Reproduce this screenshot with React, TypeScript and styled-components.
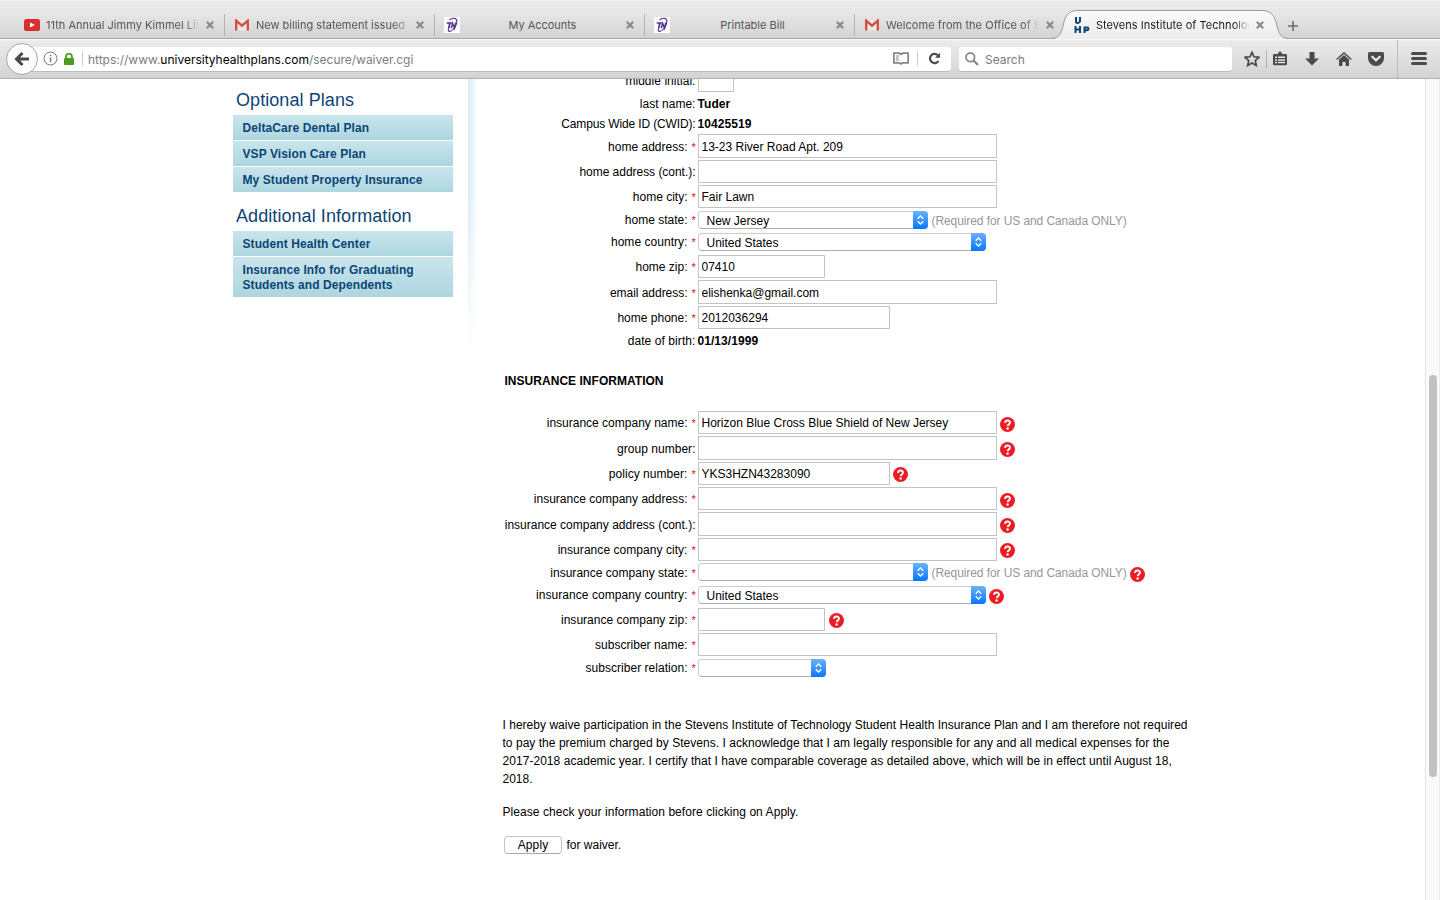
import React from "react";
import styled, { createGlobalStyle } from "styled-components";

const Global = createGlobalStyle`
  *{box-sizing:border-box}
  html,body{margin:0;padding:0;background:#fff}
  body{font-family:"Liberation Sans",Arial,sans-serif;font-size:12px;color:#000;overflow:hidden}
`;
const UI = `Inter, "Open Sans", sans-serif`;

const Window = styled.div`width:1440px;height:900px;display:flex;flex-direction:column;overflow:hidden;background:#fff;`;

/* ---- tab strip ---- */
const TabStrip = styled.div`height:39px;flex:none;display:flex;padding-left:14px;border-bottom:1px solid #a9a9a9;
  background:linear-gradient(#f4f4f4 0,#ebebeb 1px,#e6e6e6 14px,#d3d3d3 38px);`;
const TabBox = styled.div<{ $active?: boolean; $line?: boolean }>`
  position:relative;width:210px;height:38px;display:flex;align-items:center;padding:12px 0 0 9px;
  font:11px ${UI};color:${p => (p.$active ? "#1c1c1c" : "#565656")};
  ${p => p.$line && `background:linear-gradient(#b3b3b3,#b3b3b3) 0 14px/1px 22px no-repeat;`}
`;
const TabIcon = styled.span`width:18px;height:18px;flex:none;display:flex;align-items:center;justify-content:center;position:relative;`;
const TabTitle = styled.span<{ $center?: boolean; $ls: number }>`
  width:153px;margin-left:5px;overflow:hidden;white-space:nowrap;line-height:18px;position:relative;
  text-align:${p => (p.$center ? "center" : "left")};letter-spacing:${p => p.$ls}px;
  ${p => !p.$center && `mask-image:linear-gradient(90deg,#000 138px,transparent 154px);`}
`;
const TabClose = styled.svg`width:8px;height:8px;margin:0 0 1px 7px;position:relative;`;
const TabShape = styled.svg`position:absolute;left:-14px;top:9px;`;
const NewTab = styled.svg`margin:20px 0 0 13px;`;

/* ---- toolbar ---- */
const Toolbar = styled.div`height:40px;flex:none;display:flex;align-items:center;padding-left:6px;border-bottom:1px solid #b1b1b1;
  background:linear-gradient(#f8f8f8 0,#ebebeb 2px,#d3d3d3 39px);`;
const Back = styled.div`width:32px;height:32px;border-radius:50%;border:1px solid #a6a6a6;background:#fcfcfc;flex:none;z-index:1;
  display:flex;align-items:center;justify-content:center;`;
const UrlBar = styled.div`width:929px;height:24px;margin-left:-16px;padding-left:21px;background:#fff;border-radius:0 3px 3px 0;
  box-shadow:0 1px 0 #bcbcbc;display:flex;align-items:center;font:12px ${UI};color:#7d7d7d;`;
const UrlText = styled.span`margin-left:5px;flex:1;white-space:nowrap;padding-top:1px;letter-spacing:-0.01px;b{font-weight:400;color:#000}`;
const Rule = styled.i<{ $h: number; $c?: string }>`width:1px;height:${p => p.$h}px;background:${p => p.$c || "#cfcfcf"};flex:none;`;
const SearchBox = styled.div`width:273px;height:24px;margin-left:8px;padding-left:6px;background:#fff;border-radius:3px;box-shadow:0 1px 0 #bcbcbc;
  display:flex;align-items:center;gap:6px;font:12px ${UI};color:#7a7a7a;span{padding-top:1px}`;
const Tools = styled.div`display:flex;align-items:center;flex:1;padding-left:12px;svg{flex:none}`;
const Space = styled.i<{ $w: number }>`width:${p => p.$w}px;flex:none;`;

/* ---- page ---- */
const Page = styled.div`flex:1;min-height:0;display:flex;overflow:hidden;`;
const Sidebar = styled.aside`width:453px;padding:7px 0 0 233px;flex:none;`;
const SideTitle = styled.h2`margin:0;padding-left:3px;height:29px;font:18px/28px "Liberation Sans",Arial,sans-serif;color:#0b4577;letter-spacing:.07px;`;
const SideList = styled.div`display:flex;flex-direction:column;gap:1px;margin-bottom:10px;`;
const SideLink = styled.a`padding:6px 20px 4px 9.5px;font-weight:700;line-height:15px;color:#0b4577;letter-spacing:.09px;background:linear-gradient(#c9e5eb,#add6e0);`;
const Edge = styled.div`width:10px;height:271px;margin-left:15px;flex:none;background:linear-gradient(90deg,#d6ebf1,#fff);
  mask-image:linear-gradient(#000 40%,transparent);`;
const Main = styled.main`flex:1;padding-left:24px;min-width:0;`;
const Row = styled.div<{ $h: number; $gap: number }>`display:flex;height:${p => p.$h}px;margin-top:${p => p.$gap}px;`;
const Label = styled.label<{ $lh: number; $ls: number }>`width:193.5px;flex:none;display:flex;justify-content:flex-end;white-space:nowrap;
  line-height:${p => p.$lh}px;letter-spacing:${p => p.$ls}px;`;
const Star = styled.span`color:#e0101c;font-size:11px;width:4px;margin-left:4px;letter-spacing:0;`;
const Field = styled.div`display:flex;align-items:center;margin-left:2.5px;`;
const Input = styled.input<{ $w: number; $h: number }>`width:${p => p.$w}px;height:${p => p.$h}px;border:1px solid #c3c3c3;border-radius:0;outline:0;
  padding:1px 3px 0 2.5px;background:#fff;font:12px "Liberation Sans",Arial,sans-serif;color:#000;`;
const Value = styled.b`line-height:20px;margin-left:-.5px;letter-spacing:.06px;`;
const SelectBox = styled.div<{ $w: number }>`width:${p => p.$w}px;height:18px;border:1px solid #cdcdcd;border-bottom-color:#adadad;border-radius:4px;
  display:flex;justify-content:space-between;padding-left:7.5px;line-height:18px;`;
const Arrows = styled.span`width:15px;height:18px;margin:-1px -1px 0 0;border-radius:0 4px 4px 0;background:linear-gradient(#6bb2fc,#0a76fe);
  display:flex;align-items:center;justify-content:center;`;
const Hint = styled.span`color:#979797;margin-left:3.5px;padding-top:2px;line-height:18px;white-space:nowrap;letter-spacing:-.085px;`;
const HelpIcon = styled.svg<{ $dy: number; $ml: number }>`margin:${p => p.$dy * 2}px 0 0 ${p => p.$ml}px;flex:none;`;
const Section = styled.h3`margin:20px 0 20px 2.5px;font-size:12px;line-height:20px;height:20px;letter-spacing:.03px;`;
const Para = styled.p<{ $top: number }>`margin:${p => p.$top}px 0 0 .5px;line-height:18px;white-space:nowrap;`;
const Line = styled.span<{ $ls: number }>`display:block;letter-spacing:${p => p.$ls}px;`;
const Submit = styled.div`display:flex;align-items:center;margin:15px 0 0 2px;height:18px;gap:4.500px;`;
const Button = styled.button`width:58px;height:18px;border:1px solid #c4c4c4;border-bottom-color:#a9a9a9;border-radius:4px;background:#fff;padding:0;
  font:12px/16px "Liberation Sans",Arial,sans-serif;color:#000;letter-spacing:.1px;`;
const Scroll = styled.div`width:15px;flex:none;background:#fafafa;border-left:1px solid #e4e4e4;border-right:1px solid #ececec;padding:296px 0 0 3px;`;
const Thumb = styled.div`width:8px;height:402px;border-radius:4px;background:#c1c1c1;`;

const YouTube = () => <svg width="16" height="12" viewBox="0 0 16 12"><rect width="16" height="12" rx="2.6" fill="#d8302f" /><path d="M6 3.4v5.2L11 6z" fill="#fff" /></svg>;
const Gmail = () => (
  <svg width="14" height="12" viewBox="0 0 14 12"><path d="M1 .5h12v11H1z" fill="#e9e7e7" /><path d="M1.200 11.500V1.700L7 6.700l5.800-5V11.500" fill="none" stroke="#d54b3f" strokeWidth="2.300" /></svg>
);
const TN = () => (
  <svg width="16" height="16" viewBox="0 0 16 16"><rect width="16" height="16" fill="#fbfbfd" />
    <g fill="none" stroke="#4f3490"><path d="M2.800 6h5M5.900 6L4.700 11.300" strokeWidth="1.700" /><path d="M7.300 11.300l1.300-5 1.900 4.800 1.400-5.600" strokeWidth="1.500" /><path d="M5.500 3.200C8 .4 12.700.4 12.900 4c.2 4.500-3.500 9.500-6.600 10.300-1.800.4-2.500-1.200-1.700-3" strokeWidth="1.100" /></g></svg>
);
const UHP = () => (
  <svg width="16" height="16" viewBox="0 0 16 16" fill="none" stroke="#0c4378" strokeWidth="2"><path d="M2 0v4.500q0 1.500 1.500 1.500T6 4.500V0M1.500 9V16M6 9V16M1.500 12.500h5M10.500 16V10.500h2.700q1.300 0 1.300 1.300t-1.300 1.400H10.500" /></svg>
);
const Close = () => <TabClose viewBox="0 0 8 8"><path d="M.8.8l6.400 6.400M7.200.8L.8 7.200" stroke="#8a8a8a" strokeWidth="2.200" /></TabClose>;

const icons = { yt: YouTube, gm: Gmail, tn: TN, uhp: UHP };
const tabs: { icon: keyof typeof icons; title: string; ls: number; center?: boolean; active?: boolean }[] = [
  { icon: "yt", title: "11th Annual Jimmy Kimmel Live", ls: 0.02 },
  { icon: "gm", title: "New billing statement issued", ls: 0 },
  { icon: "tn", title: "My Accounts", ls: -0.05, center: true },
  { icon: "tn", title: "Printable Bill", ls: 0, center: true },
  { icon: "gm", title: "Welcome from the Office of St", ls: 0.05 },
  { icon: "uhp", title: "Stevens Institute of Technology", ls: 0.03, active: true },
];

const Help = ({ dy = 1, ml = 3 }) => (
  <HelpIcon $dy={dy} $ml={ml} width="15" height="15" viewBox="0 0 15 15"><circle cx="7.500" cy="7.500" r="7.500" fill="#ed1c24" />
    <path d="M5.100 5.900c0-3.200 4.900-3 4.900-.3 0 1.800-2.200 1.700-2.400 3.600" fill="none" stroke="#fff" strokeWidth="1.900" /><circle cx="7.600" cy="11.500" r="1.200" fill="#fff" /></HelpIcon>
);
const Select = ({ w, value }: { w: number; value?: string }) => (
  <SelectBox $w={w}><span>{value}</span><Arrows><svg width="7" height="10" viewBox="0 0 7 10" fill="none" stroke="#fff" strokeWidth="1.300"><path d="M.7 3.700L3.500 1l2.800 2.700M.7 6.300L3.500 9l2.800-2.700" /></svg></Arrows></SelectBox>
);

type R = { label: string; req?: boolean; gap: number; h: number; w?: number; value?: string; kind?: "text" | "select"; hint?: boolean; help?: number; ml?: number; ls?: number; drop?: number };
const home: R[] = [
  { label: "middle initial:", gap: -11, h: 24, w: 36, ls: 0.05 },
  { label: "last name:", gap: 2, h: 20, kind: "text", value: "Tuder", ls: 0.03 },
  { label: "Campus Wide ID (CWID):", gap: 0, h: 20, kind: "text", value: "10425519", ls: -0.14 },
  { label: "home address:", req: true, gap: 0, h: 24, w: 299, value: "13-23 River Road Apt. 209" },
  { label: "home address (cont.):", gap: 2, h: 23, w: 299, ls: -0.03 },
  { label: "home city:", req: true, gap: 2, h: 23, w: 299, value: "Fair Lawn" },
  { label: "home state:", req: true, gap: 3, h: 18, w: 230, kind: "select", value: "New Jersey", hint: true },
  { label: "home country:", req: true, gap: 4, h: 18, w: 288, kind: "select", value: "United States", ls: 0.04 },
  { label: "home zip:", req: true, gap: 4, h: 23, w: 127, value: "07410" },
  { label: "email address:", req: true, gap: 2, h: 24, w: 299, value: "elishenka@gmail.com", ls: -0.03 },
  { label: "home phone:", req: true, gap: 2, h: 23, w: 192, value: "2012036294" },
  { label: "date of birth:", gap: 2, h: 20, kind: "text", value: "01/13/1999", ls: 0.08 },
];
const insurance: R[] = [
  { label: "insurance company name:", req: true, gap: 0, h: 23, w: 299, value: "Horizon Blue Cross Blue Shield of New Jersey", help: 2 },
  { label: "group number:", gap: 2, h: 24, w: 299, help: 1.5, ls: 0.03 },
  { label: "policy number:", req: true, gap: 2, h: 23, w: 192, value: "YKS3HZN43283090", help: 1, ls: 0.05 },
  { label: "insurance company address:", req: true, gap: 2, h: 23, w: 299, help: 2, ls: 0.01 },
  { label: "insurance company address (cont.):", gap: 2, h: 24, w: 299, help: 1.5 },
  { label: "insurance company city:", req: true, gap: 2, h: 23, w: 299, help: 1, ls: 0.05 },
  { label: "insurance company state:", req: true, gap: 2, h: 18, w: 230, kind: "select", hint: true, help: 2.5, ls: 0.02, drop: 2 },
  { label: "insurance company country:", req: true, gap: 5, h: 18, w: 288, kind: "select", value: "United States", help: 1.5, ls: 0.05 },
  { label: "insurance company zip:", req: true, gap: 4, h: 23, w: 127, help: 1, ml: 4, ls: 0.02 },
  { label: "subscriber name:", req: true, gap: 2, h: 23, w: 299, ls: 0.03 },
  { label: "subscriber relation:", req: true, gap: 3, h: 18, w: 128, kind: "select", ls: 0.03 },
];
const labelLine = (r: R) => r.h + (r.drop ?? 0) + (r.kind ? 0 : r.h === 24 ? 2 : 1);
const Rows = ({ rows }: { rows: R[] }) => <>{rows.map(r => (
  <Row key={r.label} $h={r.h} $gap={r.gap}>
    <Label $lh={labelLine(r)} $ls={r.ls ?? 0}>{r.label}{r.req && <Star>*</Star>}</Label>
    <Field>
      {r.kind === "text" ? <Value>{r.value}</Value> : r.kind === "select" ? <Select w={r.w!} value={r.value} /> : <Input $w={r.w!} $h={r.h} defaultValue={r.value} />}
      {r.hint && <Hint>(Required for US and Canada ONLY)</Hint>}
      {r.help !== undefined && <Help dy={r.help} ml={r.ml ?? 3} />}
    </Field>
  </Row>
))}</>;

export default function App() {
  return (
    <Window>
      <Global />
      <TabStrip>
        {tabs.map((t, i) => {
          const Icon = icons[t.icon];
          return (
            <TabBox key={i} $active={t.active} $line={i > 0 && !t.active}>
              {t.active && (
                <TabShape width="240" height="30" viewBox="0 0 240 30">
                  <defs><linearGradient id="tab" x1="0" x2="0" y1="0" y2="1"><stop offset="0" stopColor="#fafafa" /><stop offset="1" stopColor="#ececec" /></linearGradient></defs>
                  <path d="M2 30C9 29 11 25 13 17C15 7 18 1.500 28 1.500H212C221 1.500 225 7 227 17C229 25 231 29 238 30z" fill="url(#tab)" />
                  <path d="M2 29.500C9 29 11 25 13 17C15 7 18 1.500 28 1.500H212C221 1.500 225 7 227 17C229 25 231 29 238 29.500" fill="none" stroke="#999" />
                </TabShape>
              )}
              <TabIcon><Icon /></TabIcon>
              <TabTitle $center={t.center} $ls={t.ls}>{t.title}</TabTitle>
              <Close />
            </TabBox>
          );
        })}
        <NewTab width="12" height="12" viewBox="0 0 12 12"><path d="M6 1v10M1 6h10" stroke="#6e6e6e" strokeWidth="1.600" /></NewTab>
      </TabStrip>
      <Toolbar>
        <Back><svg width="16" height="14" viewBox="0 0 16 14" fill="none" stroke="#4a4a4a" strokeWidth="3"><path d="M15 7H3M8.500 1L2.500 7l6 6" /></svg></Back>
        <UrlBar>
          <svg width="15" height="15" viewBox="0 0 15 15"><circle cx="7.500" cy="7.500" r="6.500" fill="none" stroke="#7c7c7c" /><path d="M7.500 6.500V11M7.500 3.700v1.500" stroke="#7c7c7c" strokeWidth="1.500" /></svg>
          <Space $w={6} />
          <svg width="10" height="12" viewBox="0 0 10 12"><rect y="5" width="10" height="7" rx="1" fill="#4b9b25" /><path d="M2 6V3.700a3 3 0 0 1 6 0V6" fill="none" stroke="#4b9b25" strokeWidth="1.800" /></svg>
          <Space $w={8} />
          <Rule $h={15} />
          <UrlText>https://www.<b>universityhealthplans.com</b>/secure/waiver.cgi</UrlText>
          <svg width="16" height="13" viewBox="0 0 16 13" fill="none" stroke="#858585" strokeWidth="1.700"><path d="M.9 1.200h5.400L8 2.400l1.700-1.200h5.400v9.600H9.700L8 12l-1.700-1.200H.9z" /><path d="M3 4h3M3 6h2.500M3 8h3" strokeWidth="1" /></svg>
          <Space $w={8} />
          <Rule $h={15} />
          <Space $w={10} />
          <svg width="13" height="13" viewBox="0 0 13 13"><path d="M10.500 9A4.600 4.600 0 1 1 9.800 3.200" fill="none" stroke="#4b4b4b" strokeWidth="2.200" /><path d="M12 .8v5H7z" fill="#4b4b4b" /></svg>
          <Space $w={10} />
        </UrlBar>
        <SearchBox>
          <svg width="14" height="14" viewBox="0 0 14 14" fill="none" stroke="#8c8c8c"><circle cx="5.300" cy="5.300" r="4.300" strokeWidth="1.800" /><path d="M8.500 8.500l4.500 4.500" strokeWidth="2.400" /></svg>
          <span>Search</span>
        </SearchBox>
        <Tools>
          <svg width="16" height="16" viewBox="0 0 16 16"><path d="M8 1.300l2 4.500 4.900.5-3.600 3.300 1 4.900L8 12l-4.300 2.500 1-4.900L1.100 6.300 6 5.800z" fill="none" stroke="#4b4b4b" strokeWidth="1.700" /></svg>
          <Space $w={6} /><Rule $h={18} $c="#b4b4b4" /><Space $w={6} />
          <svg width="14" height="15" viewBox="0 0 14 15"><path d="M1.200 3H4.500L7 0l2.500 3H12.800Q14 3 14 4.200V13Q14 14.200 12.800 14.200H1.200Q0 14.200 0 13V4.200Q0 3 1.200 3z" fill="#4b4b4b" /><path d="M2 6.200h2M2 8.900h2M2 11.600h2M5 6.200h7M5 8.900h7M5 11.600h7" stroke="#e3e3e3" strokeWidth="1.500" /></svg>
          <Space $w={18} />
          <svg width="14" height="14" viewBox="0 0 14 14"><path d="M4.500 0h5v6.500H14L7 13.500 0 6.500h4.500z" fill="#4b4b4b" /></svg>
          <Space $w={17} />
          <svg width="16" height="14" viewBox="0 0 16 14"><path d="M.6 7.600L8 .9l7.400 6.700" fill="none" stroke="#4b4b4b" strokeWidth="1.400" /><path d="M8 3l5 4.600V14H9.600v-4H6.400v4H3V7.600z" fill="#4b4b4b" /></svg>
          <Space $w={16} />
          <svg width="16" height="14" viewBox="0 0 16 14"><path d="M1.500 0h13Q16 0 16 1.500V6a8 8 0 0 1-16 0V1.500Q0 0 1.500 0z" fill="#4b4b4b" /><path d="M4.200 4.700L8 8.300l3.800-3.600" fill="none" stroke="#efefef" strokeWidth="2" strokeLinecap="round" /></svg>
          <Space $w={13} /><Rule $h={38} $c="#bdbdbd" /><Space $w={13} />
          <svg width="16" height="13" viewBox="0 0 16 13"><path d="M1.500 1.500h13M1.500 6.500h13M1.500 11.500h13" stroke="#4b4b4b" strokeWidth="3" strokeLinecap="round" /></svg>
        </Tools>
      </Toolbar>
      <Page>
        <Sidebar>
          <SideTitle>Optional Plans</SideTitle>
          <SideList><SideLink>DeltaCare Dental Plan</SideLink><SideLink>VSP Vision Care Plan</SideLink><SideLink>My Student Property Insurance</SideLink></SideList>
          <SideTitle>Additional Information</SideTitle>
          <SideList><SideLink>Student Health Center</SideLink><SideLink>Insurance Info for Graduating<br />Students and Dependents</SideLink></SideList>
        </Sidebar>
        <Edge />
        <Main>
          <Rows rows={home} />
          <Section>INSURANCE INFORMATION</Section>
          <Rows rows={insurance} />
          <Para $top={39}>
            <Line $ls={0.022}>I hereby waive participation in the Stevens Institute of Technology Student Health Insurance Plan and I am therefore not required</Line>
            <Line $ls={0.032}>to pay the premium charged by Stevens. I acknowledge that I am legally responsible for any and all medical expenses for the</Line>
            <Line $ls={0.047}>2017-2018 academic year. I certify that I have comparable coverage as detailed above, which will be in effect until August 18,</Line>
            <Line $ls={0}>2018.</Line>
          </Para>
          <Para $top={15}><Line $ls={0.06}>Please check your information before clicking on Apply.</Line></Para>
          <Submit><Button>Apply</Button><span>for waiver.</span></Submit>
        </Main>
        <Scroll><Thumb /></Scroll>
      </Page>
    </Window>
  );
}
